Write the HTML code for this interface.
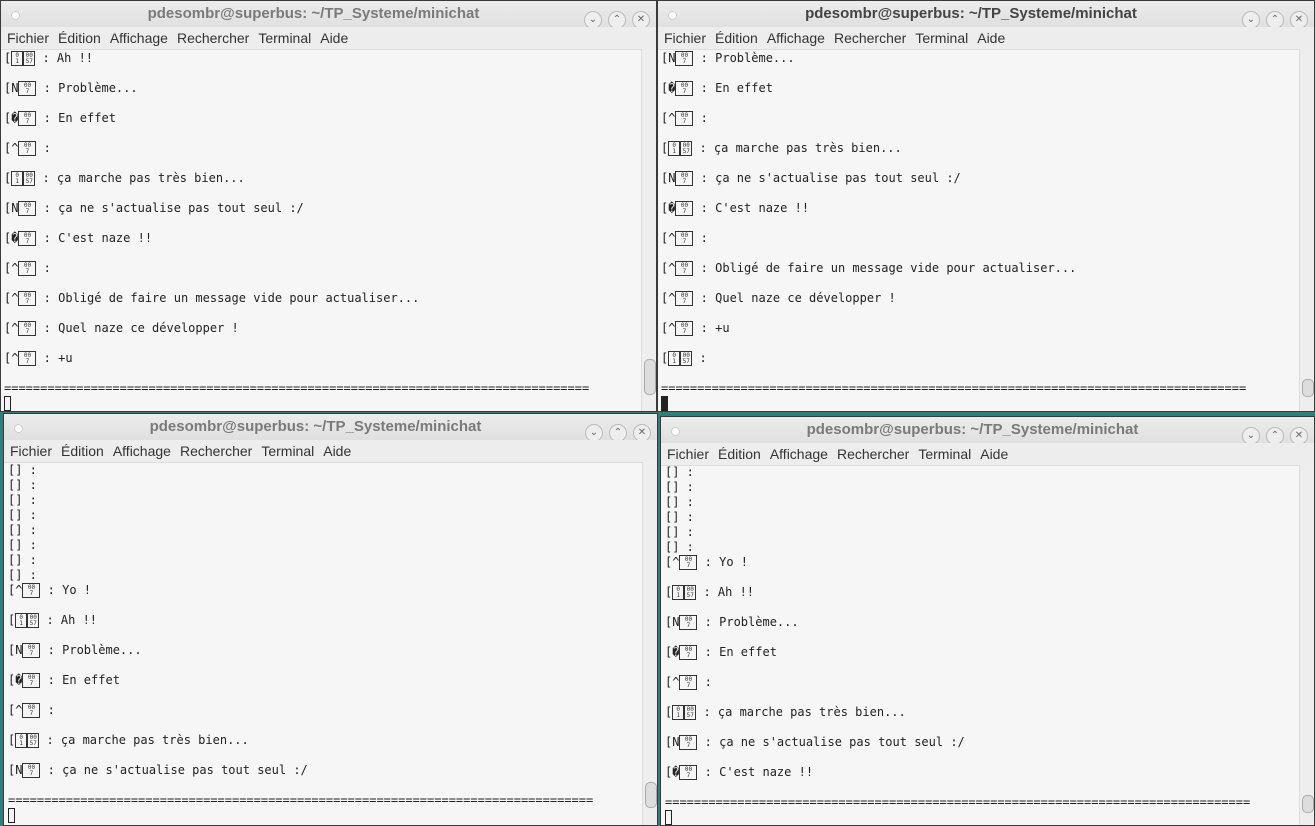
<!DOCTYPE html>
<html><head><meta charset="utf-8"><style>
body{margin:0;width:1315px;height:826px;background:#2f7f7a;position:relative;overflow:hidden;font-family:"Liberation Sans","DejaVu Sans",sans-serif}
.w{position:absolute;background:#f6f6f6;border:1px solid #3a3a3a;box-sizing:border-box;overflow:hidden}
.t{position:absolute;left:0;right:0;top:0;height:26px;background:linear-gradient(#ececec,#e0e0e0);text-align:center;font-weight:bold;color:#7a7a7a;font-size:15px;line-height:26px;padding-right:30px}
.t .dot{position:absolute;left:10px;top:10px;width:7px;height:7px;border-radius:50%;background:#fff;border:1px solid #ccc}
.btns{position:absolute;right:6px;top:4px}
.btns span{display:inline-block;width:16px;height:16px;border:1px solid #bbb;border-radius:50%;margin-left:6px;font-size:10px;line-height:16px;color:#666;font-weight:normal;text-align:center;background:#eee}
.m{position:absolute;left:0;right:0;top:26px;height:22px;background:#ededed;border-bottom:1px solid #ddd;font-size:14px;color:#333;line-height:22px;padding-left:6px}
.m span{margin-right:9px}
pre{position:absolute;margin:0;font-family:"DejaVu Sans Mono","Liberation Mono",monospace;font-size:12px;line-height:15px;color:#222}
.b{display:inline-block;width:18px;height:15px;border:1px solid #333;box-sizing:border-box;vertical-align:top;font-size:6px;line-height:6px;text-align:center;color:#333;overflow:hidden;padding-top:1px}
.b2{width:12px}
.sb{position:absolute;right:0;width:14px;background:#eee;border-left:1px solid #ddd}
.th{position:absolute;left:2px;width:10px;border-radius:5px;background:#ddd;border:1px solid #aaa}
.cur{display:inline-block;width:7px;height:15px;border:1px solid #222;box-sizing:border-box;vertical-align:top}
.curf{background:#222}
</style></head><body>

<!-- W1 -->
<div class="w" style="left:0;top:0;width:657px;height:412px">
<div class="t"><div class="dot"></div>pdesombr@superbus: ~/TP_Systeme/minichat<div class="btns"><span>⌄</span><span>⌃</span><span>✕</span></div></div>
<div class="m"><span>Fichier</span><span>Édition</span><span>Affichage</span><span>Rechercher</span><span>Terminal</span><span>Aide</span></div>
<pre style="left:3px;top:50px">[<span class="b b2">0<br>1</span><span class="b b2">00<br>57</span> : Ah !!

[N<span class="b">00<br>7</span> : Problème...

[�<span class="b">00<br>7</span> : En effet

[^<span class="b">00<br>7</span> :

[<span class="b b2">0<br>1</span><span class="b b2">00<br>57</span> : ça marche pas très bien...

[N<span class="b">00<br>7</span> : ça ne s'actualise pas tout seul :/

[�<span class="b">00<br>7</span> : C'est naze !!

[^<span class="b">00<br>7</span> :

[^<span class="b">00<br>7</span> : Obligé de faire un message vide pour actualiser...

[^<span class="b">00<br>7</span> : Quel naze ce développer !

[^<span class="b">00<br>7</span> : +u

=================================================================================
<span class="cur"></span></pre>
<div class="sb" style="top:48px;bottom:0"><div class="th" style="top:310px;height:34px"></div></div>
</div>

<!-- W2 -->
<div class="w" style="left:657px;top:0;width:658px;height:412px">
<div class="t" style="color:#444"><div class="dot"></div>pdesombr@superbus: ~/TP_Systeme/minichat<div class="btns"><span>⌄</span><span>⌃</span><span>✕</span></div></div>
<div class="m"><span>Fichier</span><span>Édition</span><span>Affichage</span><span>Rechercher</span><span>Terminal</span><span>Aide</span></div>
<pre style="left:3px;top:50px">[N<span class="b">00<br>7</span> : Problème...

[�<span class="b">00<br>7</span> : En effet

[^<span class="b">00<br>7</span> :

[<span class="b b2">0<br>1</span><span class="b b2">00<br>57</span> : ça marche pas très bien...

[N<span class="b">00<br>7</span> : ça ne s'actualise pas tout seul :/

[�<span class="b">00<br>7</span> : C'est naze !!

[^<span class="b">00<br>7</span> :

[^<span class="b">00<br>7</span> : Obligé de faire un message vide pour actualiser...

[^<span class="b">00<br>7</span> : Quel naze ce développer !

[^<span class="b">00<br>7</span> : +u

[<span class="b b2">0<br>1</span><span class="b b2">00<br>57</span> :

=================================================================================
<span class="cur curf"></span></pre>
<div class="sb" style="top:48px;bottom:0"><div class="th" style="top:330px;height:16px"></div></div>
</div>

<!-- W3 -->
<div class="w" style="left:3px;top:413px;width:655px;height:413px">
<div class="t"><div class="dot"></div>pdesombr@superbus: ~/TP_Systeme/minichat<div class="btns"><span>⌄</span><span>⌃</span><span>✕</span></div></div>
<div class="m"><span>Fichier</span><span>Édition</span><span>Affichage</span><span>Rechercher</span><span>Terminal</span><span>Aide</span></div>
<pre style="left:4px;top:49px">[] :
[] :
[] :
[] :
[] :
[] :
[] :
[] :
[^<span class="b">00<br>7</span> : Yo !

[<span class="b b2">0<br>1</span><span class="b b2">00<br>57</span> : Ah !!

[N<span class="b">00<br>7</span> : Problème...

[�<span class="b">00<br>7</span> : En effet

[^<span class="b">00<br>7</span> :

[<span class="b b2">0<br>1</span><span class="b b2">00<br>57</span> : ça marche pas très bien...

[N<span class="b">00<br>7</span> : ça ne s'actualise pas tout seul :/

=================================================================================
<span class="cur"></span></pre>
<div class="sb" style="top:48px;bottom:0"><div class="th" style="top:320px;height:24px"></div></div>
</div>

<!-- W4 -->
<div class="w" style="left:660px;top:416px;width:655px;height:410px">
<div class="t"><div class="dot"></div>pdesombr@superbus: ~/TP_Systeme/minichat<div class="btns"><span>⌄</span><span>⌃</span><span>✕</span></div></div>
<div class="m"><span>Fichier</span><span>Édition</span><span>Affichage</span><span>Rechercher</span><span>Terminal</span><span>Aide</span></div>
<pre style="left:4px;top:48px">[] :
[] :
[] :
[] :
[] :
[] :
[^<span class="b">00<br>7</span> : Yo !

[<span class="b b2">0<br>1</span><span class="b b2">00<br>57</span> : Ah !!

[N<span class="b">00<br>7</span> : Problème...

[�<span class="b">00<br>7</span> : En effet

[^<span class="b">00<br>7</span> :

[<span class="b b2">0<br>1</span><span class="b b2">00<br>57</span> : ça marche pas très bien...

[N<span class="b">00<br>7</span> : ça ne s'actualise pas tout seul :/

[�<span class="b">00<br>7</span> : C'est naze !!

=================================================================================
<span class="cur"></span></pre>
<div class="sb" style="top:48px;bottom:0"><div class="th" style="top:330px;height:16px"></div></div>
</div>
</body></html>
